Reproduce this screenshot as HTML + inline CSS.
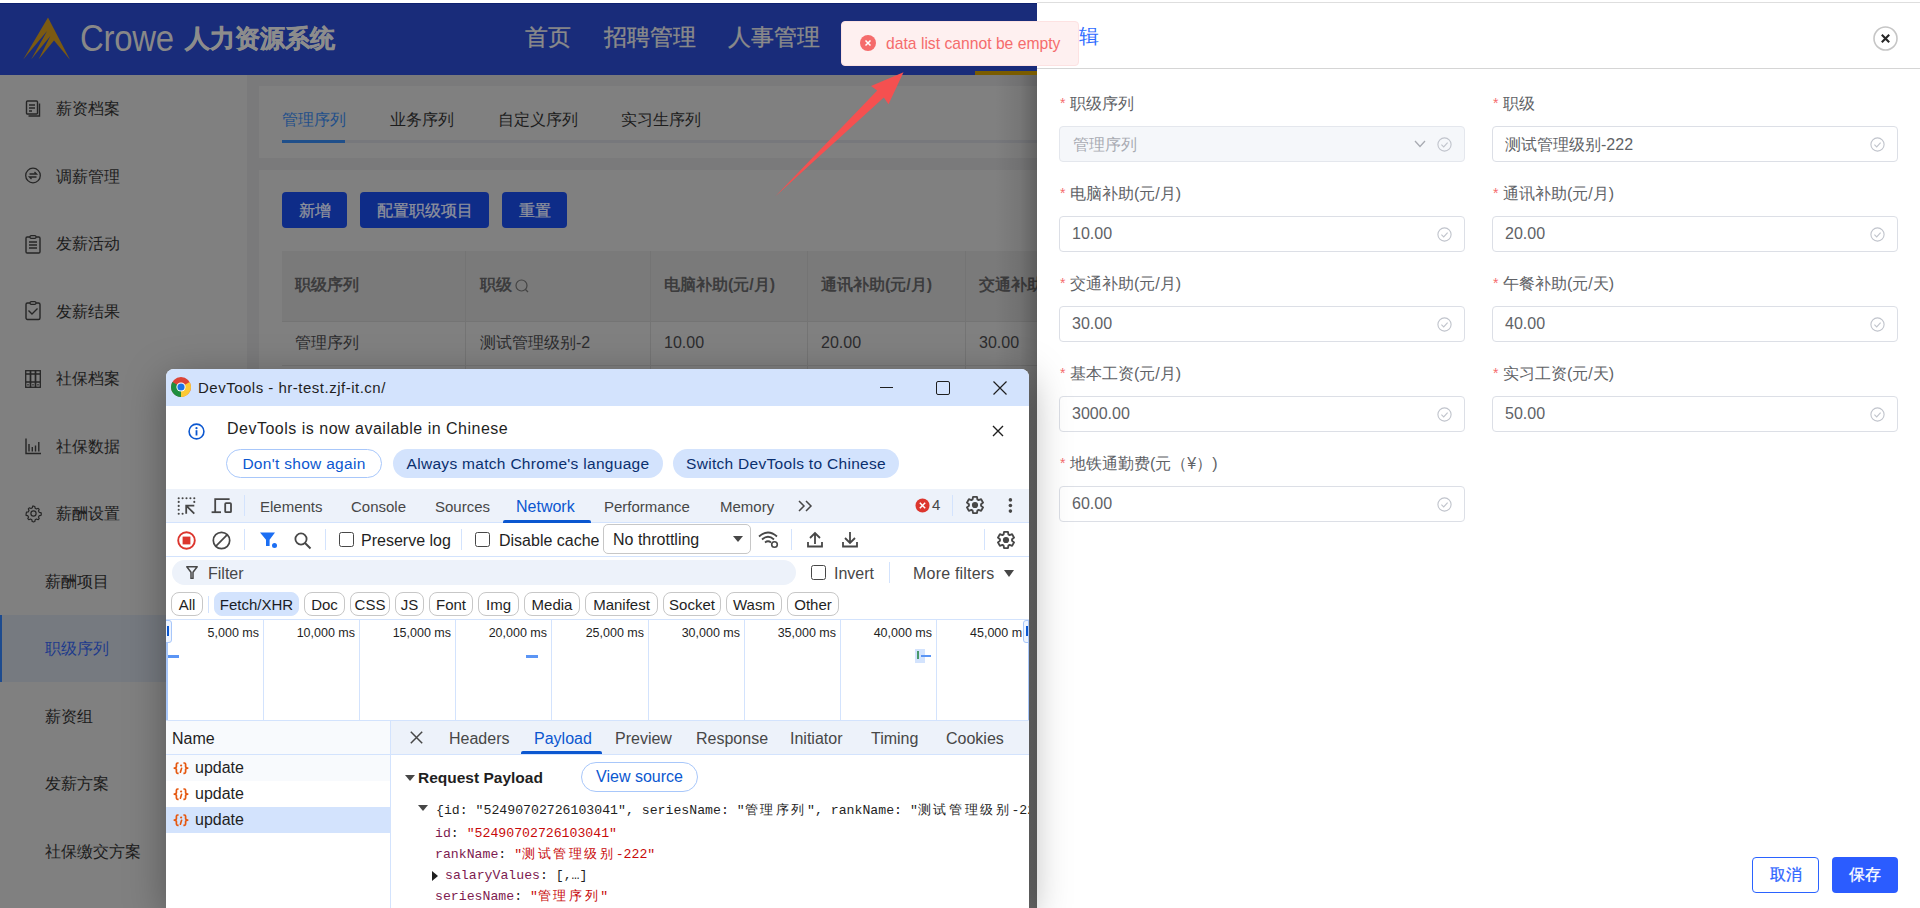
<!DOCTYPE html>
<html><head><meta charset="utf-8">
<style>
*{box-sizing:border-box;margin:0;padding:0}
html,body{width:1920px;height:908px;overflow:hidden;background:#fff;font-family:"Liberation Sans",sans-serif;position:relative}
.a{position:absolute}
.t{position:absolute;white-space:nowrap;line-height:1}
/* app */
#hdr{left:0;top:3px;width:1040px;height:72px;background:#192c7a;border-top:1px solid #0e216f}
#side{left:0;top:75px;width:247px;height:833px;background:#808080}
#main{left:247px;top:75px;width:800px;height:833px;background:#7a7a7b}
.card{background:#808080}
.sb{font-size:16px;color:#1c1c1c}
.sbi{position:absolute;left:25px;width:16px;height:17px}
.btn{position:absolute;top:192px;height:36px;background:#0e2c88;border-radius:4px;color:#8e919c;-webkit-text-stroke:0.3px #8e919c;font-size:16px;text-align:center;line-height:37px}
.th{font-size:16px;font-weight:700;color:#3c3c3d}
.td{font-size:16px;color:#2c2c2e}
</style></head><body>

<!-- ============ APP HEADER ============ -->
<div id="hdr" class="a"></div>
<svg class="a" style="left:0;top:0" width="80" height="70" viewBox="0 0 80 70"><path d="M48 17.6 L70 59.8 L54 40.5 L38.5 59.5 L50.4 36.1 L31.1 59.5 L47.1 31 L23.2 59.5 Z" fill="#7b5a12"/></svg>
<div class="t" style="left:80px;top:20px;font-size:37px;color:#888;letter-spacing:-0.3px;transform:scaleX(0.89);transform-origin:0 0">Crowe</div>
<div class="t" style="left:185px;top:26px;font-size:25px;font-weight:700;color:#8c8c8c;-webkit-text-stroke:0.5px #8c8c8c">人力资源系统</div>
<div class="t" style="left:525px;top:26px;font-size:23px;color:#8a8a8a;-webkit-text-stroke:0.35px #8a8a8a">首页</div>
<div class="t" style="left:604px;top:26px;font-size:23px;color:#8a8a8a;-webkit-text-stroke:0.35px #8a8a8a">招聘管理</div>
<div class="t" style="left:728px;top:26px;font-size:23px;color:#8a8a8a;-webkit-text-stroke:0.35px #8a8a8a">人事管理</div>
<div class="a" style="left:975px;top:71px;width:70px;height:4px;background:#7a5c00"></div>

<!-- ============ SIDEBAR ============ -->
<div id="side" class="a"></div>
<div class="a" style="left:0;top:615px;width:247px;height:67px;background:#767a80"></div>
<div class="a" style="left:0;top:615px;width:2px;height:67px;background:#1d4b8f"></div>

<svg class="a" style="left:25px;top:100px" width="17" height="18" viewBox="0 0 17 18"><rect x="1.5" y="1" width="11" height="13" rx="1" fill="none" stroke="#262626" stroke-width="1.4"/><path d="M14.5 3.5 V16 H3.5" fill="none" stroke="#262626" stroke-width="1.4"/><path d="M4 5H10M4 8H10M4 11H7" stroke="#262626" stroke-width="1.3"/></svg>
<div class="t sb" style="left:56px;top:101px">薪资档案</div>
<svg class="a" style="left:25px;top:167px" width="17" height="18" viewBox="0 0 17 18"><circle cx="8" cy="8.5" r="7.3" fill="none" stroke="#262626" stroke-width="1.3"/><path d="M4.5 7H11.5L9.5 5M11.5 10H4.5L6.5 12" fill="none" stroke="#262626" stroke-width="1.3"/></svg>
<div class="t sb" style="left:56px;top:169px">调薪管理</div>
<svg class="a" style="left:25px;top:235px" width="17" height="20" viewBox="0 0 17 20"><rect x="1" y="2" width="14" height="16" rx="1.2" fill="none" stroke="#262626" stroke-width="1.4"/><rect x="5" y="0.7" width="6" height="2.6" rx="1" fill="#808080" stroke="#262626" stroke-width="1.2"/><path d="M4 7H12M4 10H12M4 13H12" stroke="#262626" stroke-width="1.3"/></svg>
<div class="t sb" style="left:56px;top:236px">发薪活动</div>
<svg class="a" style="left:25px;top:301px" width="17" height="20" viewBox="0 0 17 20"><rect x="1" y="2" width="14" height="16.5" rx="1.5" fill="none" stroke="#262626" stroke-width="1.4"/><rect x="5" y="0.7" width="6" height="2.6" rx="1.3" fill="#808080" stroke="#262626" stroke-width="1.2"/><path d="M3.5 9.5L7 13L12.5 7.5" fill="none" stroke="#262626" stroke-width="1.4"/></svg>
<div class="t sb" style="left:56px;top:304px">发薪结果</div>
<svg class="a" style="left:25px;top:370px" width="17" height="18" viewBox="0 0 17 18"><rect x="0.7" y="0.7" width="4.6" height="16.6" fill="none" stroke="#262626" stroke-width="1.3"/><rect x="5.7" y="0.7" width="4.6" height="16.6" fill="none" stroke="#262626" stroke-width="1.3"/><rect x="10.7" y="0.7" width="4.6" height="16.6" fill="none" stroke="#262626" stroke-width="1.3"/><path d="M1 4H15M1 12H15" stroke="#262626" stroke-width="1.3"/><path d="M3 14V15.5M8 14V15.5M13 14V15.5" stroke="#262626" stroke-width="1.2"/></svg>
<div class="t sb" style="left:56px;top:371px">社保档案</div>
<svg class="a" style="left:25px;top:438px" width="17" height="18" viewBox="0 0 17 18"><path d="M1 0.5V15.5H16" fill="none" stroke="#262626" stroke-width="1.4"/><path d="M4 13.5V6M7.3 13.5V9M10.5 13.5V7.5M13.8 13.5V4" stroke="#262626" stroke-width="1.4"/></svg>
<div class="t sb" style="left:56px;top:439px">社保数据</div>
<svg class="a" style="left:25px;top:505px" width="17" height="18" viewBox="0 0 17 18"><path d="M8.5 1.2l1.3.3.4 1.8 1.3.7 1.7-.7 1 1 -.7 1.7.7 1.3 1.8.4.3 1.3-.3 1.3-1.8.4-.7 1.3.7 1.7-1 1-1.7-.7-1.3.7-.4 1.8-1.3.3-1.3-.3-.4-1.8-1.3-.7-1.7.7-1-1 .7-1.7-.7-1.3-1.8-.4L1.2 8.5l.3-1.3 1.8-.4.7-1.3-.7-1.7 1-1 1.7.7 1.3-.7.4-1.8z" fill="none" stroke="#262626" stroke-width="1.2" stroke-linejoin="round"/><circle cx="8.5" cy="8.5" r="2.6" fill="none" stroke="#262626" stroke-width="1.2"/></svg>
<div class="t sb" style="left:56px;top:506px">薪酬设置</div>
<div class="t sb" style="left:45px;top:574px;color:#1c1c1c">薪酬项目</div>
<div class="t sb" style="left:45px;top:641px;color:#1e3b8c">职级序列</div>
<div class="t sb" style="left:45px;top:709px;color:#1c1c1c">薪资组</div>
<div class="t sb" style="left:45px;top:776px;color:#1c1c1c">发薪方案</div>
<div class="t sb" style="left:45px;top:844px;color:#1c1c1c">社保缴交方案</div>

<!-- ============ MAIN CONTENT ============ -->
<div id="main" class="a"></div>
<div class="a card" style="left:259px;top:86px;width:800px;height:72px"></div>
<div class="a card" style="left:259px;top:170px;width:800px;height:740px"></div>
<div class="t" style="left:282px;top:112px;font-size:16px;color:#1f4f8a">管理序列</div>
<div class="t" style="left:390px;top:112px;font-size:16px;color:#1c1c1c">业务序列</div>
<div class="t" style="left:498px;top:112px;font-size:16px;color:#1c1c1c">自定义序列</div>
<div class="t" style="left:621px;top:112px;font-size:16px;color:#1c1c1c">实习生序列</div>
<div class="a" style="left:282px;top:140px;width:760px;height:3px;background:#77787c"></div>
<div class="a" style="left:282px;top:140px;width:63px;height:3px;background:#1f4f8a"></div>

<div class="btn" style="left:282px;width:65px">新增</div>
<div class="btn" style="left:360px;width:129px">配置职级项目</div>
<div class="btn" style="left:502px;width:65px">重置</div>

<!-- table -->
<div class="a" style="left:282px;top:251px;width:760px;height:70px;background:#7a7a7a"></div>
<div class="a" style="left:282px;top:321px;width:760px;height:1px;background:#747474"></div>
<div class="a" style="left:282px;top:365px;width:760px;height:1px;background:#747474"></div>
<div class="a" style="left:465px;top:251px;width:1px;height:120px;background:#747474"></div>
<div class="a" style="left:650px;top:251px;width:1px;height:120px;background:#747474"></div>
<div class="a" style="left:807px;top:251px;width:1px;height:120px;background:#747474"></div>
<div class="a" style="left:965px;top:251px;width:1px;height:120px;background:#747474"></div>
<div class="t th" style="left:295px;top:277px">职级序列</div>
<div class="t th" style="left:480px;top:277px">职级</div>
<svg class="a" style="left:514px;top:278px" width="16" height="16" viewBox="0 0 16 16"><circle cx="7.5" cy="7.5" r="5.5" fill="none" stroke="#444" stroke-width="1.2"/><path d="M11.5 11.5 L14 14" stroke="#444" stroke-width="1.2"/></svg>
<div class="t th" style="left:664px;top:277px">电脑补助(元/月)</div>
<div class="t th" style="left:821px;top:277px">通讯补助(元/月)</div>
<div class="t th" style="left:979px;top:277px">交通补助(元/月)</div>
<div class="t td" style="left:295px;top:335px">管理序列</div>
<div class="t td" style="left:480px;top:335px">测试管理级别-2</div>
<div class="t td" style="left:664px;top:335px">10.00</div>
<div class="t td" style="left:821px;top:335px">20.00</div>
<div class="t td" style="left:979px;top:335px">30.00</div>

<!-- shadow of drawer onto overlay -->
<div class="a" style="left:995px;top:75px;width:42px;height:833px;background:linear-gradient(90deg,rgba(0,0,0,0),rgba(0,0,0,0.08) 60%,rgba(0,0,0,0.24))"></div>

<!-- ============ DEVTOOLS WINDOW ============ -->
<div id="dt" class="a" style="z-index:5;left:166px;top:369px;width:863px;height:539px;background:#fff;border-radius:8px 8px 0 0;overflow:hidden;box-shadow:0 10px 40px rgba(0,0,0,0.34);font-family:'Liberation Sans',sans-serif;color:#1f1f1f">
 <style>
  #dt .t{font-size:15px}
  #dt .ln{position:absolute;background:#d3e3fd}
  #dt .chip{position:absolute;top:223px;height:24px;border:1px solid #c7c7c7;border-radius:8px;font-size:15px;line-height:23px;text-align:center;color:#1f1f1f}
  #dt .gl{position:absolute;top:251px;width:1px;height:100px;background:#d3e3fd}
  #dt .tl{position:absolute;top:258px;font-size:12.5px;line-height:1;white-space:nowrap;color:#1f1f1f;text-align:right}
  #dt .mono{font-family:'Liberation Mono',monospace;font-size:13.2px;line-height:1;white-space:nowrap;position:absolute}
  #dt .cj{letter-spacing:2.6px}
  #dt .k{color:#7d1b50}
  #dt .s{color:#c80a0a}
 </style>
 <!-- title bar -->
 <div class="a" style="left:0;top:0;width:863px;height:37px;background:#d3e3fd"></div>
 <svg class="a" style="left:5px;top:8px" width="20" height="20" viewBox="0 0 20 20">
  <circle cx="10" cy="10" r="10" fill="#db4437"/>
  <path d="M10 10 L18.66 5 A10 10 0 0 1 10 20 Z" fill="#fcc934"/>
  <path d="M10 10 L10 20 A10 10 0 0 1 1.34 5 Z" fill="#1e8e3e"/>
  <circle cx="10" cy="10" r="4.6" fill="#fff"/>
  <circle cx="10" cy="10" r="3.6" fill="#1a73e8"/>
 </svg>
 <div class="t" style="left:32px;top:11px;font-size:15px;letter-spacing:0.5px;color:#1f1f1f">DevTools - hr-test.zjf-it.cn/</div>
 <div class="a" style="left:714px;top:18px;width:13px;height:1px;background:#1f1f1f"></div>
 <div class="a" style="left:770px;top:12px;width:14px;height:14px;border:1.2px solid #1f1f1f;border-radius:2px"></div>
 <svg class="a" style="left:826px;top:11px" width="16" height="16" viewBox="0 0 16 16"><path d="M1.5 1.5L14.5 14.5M14.5 1.5L1.5 14.5" stroke="#1f1f1f" stroke-width="1.2"/></svg>

 <!-- info bar -->
 <svg class="a" style="left:22px;top:54px" width="17" height="17" viewBox="0 0 17 17"><circle cx="8.5" cy="8.5" r="7.4" fill="none" stroke="#0b57d0" stroke-width="1.6"/><circle cx="8.5" cy="5.2" r="1.1" fill="#0b57d0"/><rect x="7.6" y="7.2" width="1.8" height="5.3" fill="#0b57d0"/></svg>
 <div class="t" style="left:61px;top:52px;font-size:16px;letter-spacing:0.5px;color:#1f1f1f">DevTools is now available in Chinese</div>
 <svg class="a" style="left:826px;top:56px" width="12" height="12" viewBox="0 0 12 12"><path d="M1 1L11 11M11 1L1 11" stroke="#1f1f1f" stroke-width="1.4"/></svg>
 <div class="a" style="left:60px;top:80px;width:156px;height:29px;border:1px solid #a8c7fa;border-radius:15px;color:#0b57d0;font-size:15.5px;line-height:27px;text-align:center;letter-spacing:0.3px">Don't show again</div>
 <div class="a" style="left:227px;top:80px;width:270px;height:29px;background:#d3e3fd;border-radius:15px;color:#0a2f6e;font-size:15.5px;line-height:29px;text-align:center;letter-spacing:0.3px">Always match Chrome's language</div>
 <div class="a" style="left:507px;top:80px;width:226px;height:29px;background:#d3e3fd;border-radius:15px;color:#0a2f6e;font-size:15.5px;line-height:29px;text-align:center;letter-spacing:0.3px">Switch DevTools to Chinese</div>

 <!-- tab bar -->
 <div class="a" style="left:0;top:120px;width:863px;height:34px;background:#edf2fa;border-bottom:1px solid #d3e3fd"></div>
 <svg class="a" style="left:11px;top:128px" width="20" height="19" viewBox="0 0 20 19"><circle cx="1.7" cy="1.3" r="1.05" fill="#474747"/><circle cx="5.6" cy="1.3" r="1.05" fill="#474747"/><circle cx="9.5" cy="1.3" r="1.05" fill="#474747"/><circle cx="13.4" cy="1.3" r="1.05" fill="#474747"/><circle cx="17.3" cy="1.3" r="1.05" fill="#474747"/><circle cx="1.7" cy="4.9" r="1.05" fill="#474747"/><circle cx="1.7" cy="8.9" r="1.05" fill="#474747"/><circle cx="1.7" cy="12.8" r="1.05" fill="#474747"/><circle cx="1.7" cy="16.7" r="1.05" fill="#474747"/><circle cx="5.6" cy="16.7" r="1.05" fill="#474747"/><circle cx="17.3" cy="4.9" r="1.05" fill="#474747"/><path d="M17.3 8.6H9.2V16.7M9.2 8.6L17.3 16.7" fill="none" stroke="#474747" stroke-width="1.8"/></svg>
 <svg class="a" style="left:45px;top:129px" width="22" height="17" viewBox="0 0 22 17"><path d="M18.6 1.2H4.2V14.2" fill="none" stroke="#474747" stroke-width="1.8"/><path d="M0.6 14.2H10" stroke="#474747" stroke-width="1.8"/><rect x="14.2" y="5.1" width="5.8" height="9.1" rx="0.8" fill="none" stroke="#474747" stroke-width="1.8"/></svg>
 <div class="ln" style="left:78px;top:126px;width:1px;height:21px"></div>
 <div class="t" style="left:94px;top:130px;color:#474747">Elements</div>
 <div class="t" style="left:185px;top:130px;color:#474747">Console</div>
 <div class="t" style="left:269px;top:130px;color:#474747">Sources</div>
 <div class="t" style="left:350px;top:130px;color:#0b57d0;font-size:16px">Network</div>
 <div class="a" style="left:337px;top:151px;width:88px;height:3px;background:#0b57d0;border-radius:2px 2px 0 0"></div>
 <div class="t" style="left:438px;top:130px;color:#474747">Performance</div>
 <div class="t" style="left:554px;top:130px;color:#474747">Memory</div>
 <svg class="a" style="left:632px;top:131px" width="16" height="12" viewBox="0 0 16 12"><path d="M1 1L6 6L1 11M8 1L13 6L8 11" fill="none" stroke="#474747" stroke-width="1.5"/></svg>
 <svg class="a" style="left:749px;top:129px" width="15" height="15" viewBox="0 0 15 15"><circle cx="7.5" cy="7.5" r="7" fill="#dc362e"/><path d="M4.8 4.8L10.2 10.2M10.2 4.8L4.8 10.2" stroke="#fff" stroke-width="1.5"/></svg>
 <div class="t" style="left:766px;top:128px;color:#474747">4</div>
 <div class="ln" style="left:786px;top:126px;width:1px;height:21px"></div>
 <svg class="a" style="left:799px;top:126px" width="20" height="20" viewBox="0 0 20 20"><path d="M7.58 4.40 L8.04 1.83 L11.96 1.83 L12.42 4.40 L13.64 5.10 L16.09 4.22 L18.05 7.61 L16.06 9.30 L16.06 10.70 L18.05 12.39 L16.09 15.78 L13.64 14.90 L12.42 15.60 L11.96 18.17 L8.04 18.17 L7.58 15.60 L6.36 14.90 L3.91 15.78 L1.95 12.39 L3.94 10.70 L3.94 9.30 L1.95 7.61 L3.91 4.22 L6.36 5.10Z" fill="none" stroke="#474747" stroke-width="1.9" stroke-linejoin="round"/><circle cx="10" cy="10" r="3.1" fill="#474747"/></svg>
 <svg class="a" style="left:842px;top:128px" width="5" height="16" viewBox="0 0 5 16"><circle cx="2.4" cy="2.9" r="1.8" fill="#474747"/><circle cx="2.4" cy="8.5" r="1.8" fill="#474747"/><circle cx="2.4" cy="14.1" r="1.8" fill="#474747"/></svg>

 <!-- toolbar -->
 <div class="a" style="left:0;top:187px;width:863px;height:1px;background:#d3e3fd"></div>
 <svg class="a" style="left:11px;top:162px" width="19" height="19" viewBox="0 0 19 19"><circle cx="9.5" cy="9.5" r="8.3" fill="none" stroke="#dc362e" stroke-width="1.9"/><rect x="5.6" y="5.6" width="7.8" height="7.8" fill="#dc362e"/></svg>
 <svg class="a" style="left:46px;top:162px" width="19" height="19" viewBox="0 0 19 19"><circle cx="9.5" cy="9.5" r="8.2" fill="none" stroke="#474747" stroke-width="1.7"/><path d="M15.3 3.7L3.7 15.3" stroke="#474747" stroke-width="1.7"/></svg>
 <div class="ln" style="left:78px;top:160px;width:1px;height:21px"></div>
 <svg class="a" style="left:94px;top:163px" width="18" height="17" viewBox="0 0 18 17"><path d="M0 0.5H15L9.6 7.8V14H6V7.8Z" fill="#1b6ef3"/><circle cx="14.5" cy="13.5" r="2.5" fill="#1b6ef3"/></svg>
 <svg class="a" style="left:128px;top:163px" width="18" height="18" viewBox="0 0 18 18"><circle cx="7" cy="7" r="5.6" fill="none" stroke="#474747" stroke-width="1.8"/><path d="M11 11L16.5 16.5" stroke="#474747" stroke-width="1.9"/></svg>
 <div class="ln" style="left:159px;top:160px;width:1px;height:21px"></div>
 <div class="a" style="left:173px;top:163px;width:15px;height:15px;border:1.5px solid #474747;border-radius:2.5px"></div>
 <div class="t" style="left:195px;top:164px;font-size:16px;color:#1f1f1f">Preserve log</div>
 <div class="ln" style="left:295px;top:160px;width:1px;height:21px"></div>
 <div class="a" style="left:309px;top:163px;width:15px;height:15px;border:1.5px solid #474747;border-radius:2.5px"></div>
 <div class="t" style="left:333px;top:164px;font-size:16px;color:#1f1f1f">Disable cache</div>
 <div class="a" style="left:437px;top:155px;width:148px;height:30px;border:1px solid #c7c7c7;border-radius:5px"></div>
 <div class="t" style="left:447px;top:163px;font-size:16px;color:#1f1f1f">No throttling</div>
 <svg class="a" style="left:567px;top:167px" width="10" height="6" viewBox="0 0 10 6"><path d="M0 0H10L5 6Z" fill="#474747"/></svg>
 <svg class="a" style="left:592px;top:161px" width="22" height="19" viewBox="0 0 22 19"><path d="M1 6.5Q10 -1.5 19 6.5M4 9.5Q10 4 16 9.5M7 12.5Q10 10 13 12.5" fill="none" stroke="#474747" stroke-width="1.7"/><circle cx="16.5" cy="14.5" r="2.8" fill="none" stroke="#474747" stroke-width="1.6"/></svg>
 <div class="ln" style="left:625px;top:160px;width:1px;height:21px"></div>
 <svg class="a" style="left:641px;top:162px" width="16" height="17" viewBox="0 0 16 17"><path d="M8 13V2M3 7L8 2L13 7" fill="none" stroke="#474747" stroke-width="1.8"/><path d="M1 11V15.5H15V11" fill="none" stroke="#474747" stroke-width="1.8"/></svg>
 <svg class="a" style="left:676px;top:162px" width="16" height="17" viewBox="0 0 16 17"><path d="M8 1V12M3 7L8 12L13 7" fill="none" stroke="#474747" stroke-width="1.8"/><path d="M1 11V15.5H15V11" fill="none" stroke="#474747" stroke-width="1.8"/></svg>
 <div class="ln" style="left:818px;top:160px;width:1px;height:21px"></div>
 <svg class="a" style="left:830px;top:161px" width="20" height="20" viewBox="0 0 20 20"><path d="M7.58 4.40 L8.04 1.83 L11.96 1.83 L12.42 4.40 L13.64 5.10 L16.09 4.22 L18.05 7.61 L16.06 9.30 L16.06 10.70 L18.05 12.39 L16.09 15.78 L13.64 14.90 L12.42 15.60 L11.96 18.17 L8.04 18.17 L7.58 15.60 L6.36 14.90 L3.91 15.78 L1.95 12.39 L3.94 10.70 L3.94 9.30 L1.95 7.61 L3.91 4.22 L6.36 5.10Z" fill="none" stroke="#474747" stroke-width="1.9" stroke-linejoin="round"/><circle cx="10" cy="10" r="3.1" fill="#474747"/></svg>

 <!-- filter row -->
 <div class="a" style="left:0;top:220px;width:863px;height:0"></div>
 <div class="a" style="left:6px;top:191px;width:624px;height:25px;background:#edf2fa;border-radius:13px"></div>
 <svg class="a" style="left:20px;top:197px" width="12" height="13" viewBox="0 0 12 13"><path d="M0.8 0.8H11.2L7 6.3V12.5H5V6.3Z" fill="none" stroke="#474747" stroke-width="1.5" stroke-linejoin="round"/></svg>
 <div class="t" style="left:42px;top:197px;font-size:16px;color:#474747">Filter</div>
 <div class="a" style="left:645px;top:196px;width:15px;height:15px;border:1.5px solid #474747;border-radius:2.5px"></div>
 <div class="t" style="left:668px;top:197px;font-size:16px;color:#474747">Invert</div>
 <div class="ln" style="left:723px;top:193px;width:1px;height:21px"></div>
 <div class="t" style="left:747px;top:197px;font-size:16px;letter-spacing:0.2px;color:#474747">More filters</div>
 <svg class="a" style="left:838px;top:201px" width="10" height="7" viewBox="0 0 10 7"><path d="M0 0H10L5 7Z" fill="#474747"/></svg>

 <!-- chips -->
 <div class="chip" style="left:5px;width:32px">All</div>
 <div class="ln" style="left:42px;top:227px;width:1px;height:17px"></div>
 <div class="chip" style="left:48px;width:85px;background:#d3e3fd;border-color:#d3e3fd;color:#1a1d26">Fetch/XHR</div>
 <div class="chip" style="left:138px;width:41px">Doc</div>
 <div class="chip" style="left:184px;width:40px">CSS</div>
 <div class="chip" style="left:229px;width:29px">JS</div>
 <div class="chip" style="left:263px;width:44px">Font</div>
 <div class="chip" style="left:312px;width:41px">Img</div>
 <div class="chip" style="left:358px;width:56px">Media</div>
 <div class="chip" style="left:419px;width:73px">Manifest</div>
 <div class="chip" style="left:497px;width:58px">Socket</div>
 <div class="chip" style="left:560px;width:56px">Wasm</div>
 <div class="chip" style="left:621px;width:52px">Other</div>

 <!-- overview -->
 <div class="a" style="left:0;top:250px;width:863px;height:1px;background:#d3e3fd"></div>
 <div class="a" style="left:0;top:351px;width:863px;height:1px;background:#d3e3fd"></div>
 <div class="gl" style="left:97px"></div><div class="gl" style="left:193px"></div><div class="gl" style="left:289px"></div><div class="gl" style="left:385px"></div>
 <div class="gl" style="left:482px"></div><div class="gl" style="left:578px"></div><div class="gl" style="left:674px"></div><div class="gl" style="left:770px"></div>
 <div class="tl" style="left:33px;width:60px">5,000 ms</div>
 <div class="tl" style="left:119px;width:70px">10,000 ms</div>
 <div class="tl" style="left:215px;width:70px">15,000 ms</div>
 <div class="tl" style="left:311px;width:70px">20,000 ms</div>
 <div class="tl" style="left:408px;width:70px">25,000 ms</div>
 <div class="tl" style="left:504px;width:70px">30,000 ms</div>
 <div class="tl" style="left:600px;width:70px">35,000 ms</div>
 <div class="tl" style="left:696px;width:70px">40,000 ms</div>
 <div class="tl" style="left:792px;width:70px;text-align:left;left:804px">45,000 m</div>
 <div class="a" style="left:0;top:251px;width:2px;height:100px;background:#a8c7fa"></div>
 <div class="a" style="left:-4px;top:251px;width:10px;height:23px;border:1px solid #a8c7fa;border-radius:3px;background:#eef4fe"></div>
 <div class="a" style="left:1px;top:257px;width:1.5px;height:10px;background:#0b57d0"></div>
 <div class="a" style="left:2px;top:286px;width:11px;height:3px;background:#5b95f5"></div>
 <div class="a" style="left:360px;top:286px;width:12px;height:3px;background:#5b95f5"></div>
 <div class="a" style="left:749px;top:280px;width:10px;height:14px;background:#d3e3fd"></div>
 <div class="a" style="left:751px;top:282px;width:2px;height:8px;background:#4a9a6a"></div>
 <div class="a" style="left:755px;top:286px;width:10px;height:2px;background:#5b95f5"></div>
 <div class="a" style="left:857px;top:251px;width:10px;height:23px;border:1px solid #a8c7fa;border-radius:3px;background:#eef4fe"></div>
 <div class="a" style="left:860px;top:257px;width:3px;height:10px;background:#0b57d0"></div>
 <div class="a" style="left:862px;top:251px;width:1px;height:100px;background:#a8c7fa"></div>

 <!-- split -->
 <div class="a" style="left:0;top:352px;width:224px;height:33px;background:#f8fafd"></div>
 <div class="a" style="left:0;top:385px;width:224px;height:1px;background:#d3e3fd"></div>
 <div class="a" style="left:224px;top:352px;width:1px;height:187px;background:#d3e3fd"></div>
 <div class="t" style="left:6px;top:362px;font-size:16px;color:#1f1f1f">Name</div>
 <div class="a" style="left:0;top:386px;width:224px;height:26px;background:#f8fafd"></div>
 <div class="a" style="left:0;top:438px;width:224px;height:26px;background:#d3e3fd"></div>
 <!-- rows -->
 <svg class="a" style="left:7px;top:393px" width="17" height="13" viewBox="0 0 17 13"><path d="M5.6 1H4.6Q3.4 1 3.4 2.2V4.6Q3.4 5.9 1.3 6.1Q3.4 6.3 3.4 7.6V10Q3.4 11.3 4.6 11.3H5.6M10.4 1H11.4Q12.6 1 12.6 2.2V4.6Q12.6 5.9 14.7 6.1Q12.6 6.3 12.6 7.6V10Q12.6 11.3 11.4 11.3H10.4" fill="none" stroke="#e5570f" stroke-width="1.7" stroke-linejoin="round"/><circle cx="8.1" cy="3.5" r="1.1" fill="#e5570f"/><path d="M8.6 6.3L7.4 10.3" stroke="#e5570f" stroke-width="1.6" stroke-linecap="round"/></svg>
 <div class="t" style="left:29px;top:391px;font-size:16px;color:#1f1f1f">update</div>
 <svg class="a" style="left:7px;top:419px" width="17" height="13" viewBox="0 0 17 13"><path d="M5.6 1H4.6Q3.4 1 3.4 2.2V4.6Q3.4 5.9 1.3 6.1Q3.4 6.3 3.4 7.6V10Q3.4 11.3 4.6 11.3H5.6M10.4 1H11.4Q12.6 1 12.6 2.2V4.6Q12.6 5.9 14.7 6.1Q12.6 6.3 12.6 7.6V10Q12.6 11.3 11.4 11.3H10.4" fill="none" stroke="#e5570f" stroke-width="1.7" stroke-linejoin="round"/><circle cx="8.1" cy="3.5" r="1.1" fill="#e5570f"/><path d="M8.6 6.3L7.4 10.3" stroke="#e5570f" stroke-width="1.6" stroke-linecap="round"/></svg>
 <div class="t" style="left:29px;top:417px;font-size:16px;color:#1f1f1f">update</div>
 <svg class="a" style="left:7px;top:445px" width="17" height="13" viewBox="0 0 17 13"><path d="M5.6 1H4.6Q3.4 1 3.4 2.2V4.6Q3.4 5.9 1.3 6.1Q3.4 6.3 3.4 7.6V10Q3.4 11.3 4.6 11.3H5.6M10.4 1H11.4Q12.6 1 12.6 2.2V4.6Q12.6 5.9 14.7 6.1Q12.6 6.3 12.6 7.6V10Q12.6 11.3 11.4 11.3H10.4" fill="none" stroke="#e5570f" stroke-width="1.7" stroke-linejoin="round"/><circle cx="8.1" cy="3.5" r="1.1" fill="#e5570f"/><path d="M8.6 6.3L7.4 10.3" stroke="#e5570f" stroke-width="1.6" stroke-linecap="round"/></svg>
 <div class="t" style="left:29px;top:443px;font-size:16px;color:#1f1f1f">update</div>

 <!-- details -->
 <div class="a" style="left:225px;top:352px;width:638px;height:33px;background:#edf2fa"></div>
 <div class="a" style="left:225px;top:385px;width:638px;height:1px;background:#d3e3fd"></div>
 <svg class="a" style="left:244px;top:362px" width="13" height="13" viewBox="0 0 13 13"><path d="M0.8 0.8L12.2 12.2M12.2 0.8L0.8 12.2" stroke="#474747" stroke-width="1.5"/></svg>
 <div class="t" style="left:283px;top:362px;font-size:16px;color:#474747">Headers</div>
 <div class="t" style="left:368px;top:362px;font-size:16px;color:#0b57d0">Payload</div>
 <div class="a" style="left:355px;top:382px;width:81px;height:3px;background:#0b57d0;border-radius:2px 2px 0 0"></div>
 <div class="t" style="left:449px;top:362px;font-size:16px;color:#474747">Preview</div>
 <div class="t" style="left:530px;top:362px;font-size:16px;color:#474747">Response</div>
 <div class="t" style="left:624px;top:362px;font-size:16px;color:#474747">Initiator</div>
 <div class="t" style="left:705px;top:362px;font-size:16px;color:#474747">Timing</div>
 <div class="t" style="left:780px;top:362px;font-size:16px;color:#474747">Cookies</div>

 <svg class="a" style="left:239px;top:406px" width="10" height="6" viewBox="0 0 10 6"><path d="M0 0H10L5 6Z" fill="#474747"/></svg>
 <div class="t" style="left:252px;top:401px;font-size:15.5px;font-weight:700;color:#1f1f1f">Request Payload</div>
 <div class="a" style="left:415px;top:393px;width:117px;height:30px;border:1px solid #a8c7fa;border-radius:15px;color:#0b57d0;font-size:16px;line-height:28px;text-align:center">View source</div>

 <svg class="a" style="left:252px;top:436px" width="10" height="6" viewBox="0 0 10 6"><path d="M0 0H10L5 6Z" fill="#474747"/></svg>
 <div class="mono" style="left:270px;top:435px;color:#1f1f1f">{id: "52490702726103041", seriesName: "<span class="cj">管理序列</span>", rankName: "<span class="cj">测试管理级别</span>-222", salaryValues: [,…]}</div>
 <div class="mono" style="left:269px;top:458px"><span class="k">id</span>: <span class="s">"52490702726103041"</span></div>
 <div class="mono" style="left:269px;top:479px"><span class="k">rankName</span>: <span class="s">"<span class="cj">测试管理级别</span>-222"</span></div>
 <svg class="a" style="left:266px;top:502px" width="6" height="10" viewBox="0 0 6 10"><path d="M0 0V10L6 5Z" fill="#1f1f1f"/></svg>
 <div class="mono" style="left:279px;top:500px"><span class="k">salaryValues</span>: [,…]</div>
 <div class="mono" style="left:269px;top:521px"><span class="k">seriesName</span>: <span class="s">"<span class="cj">管理序列</span>"</span></div>
</div>


<!-- ============ DRAWER ============ -->
<div class="a" style="left:1037px;top:3px;width:883px;height:905px;background:#fff"></div>
<div class="a" style="left:1037px;top:2px;width:883px;height:1px;background:#dedede"></div>
<div class="a" style="left:1037px;top:68px;width:883px;height:1px;background:#d5d5d5"></div>
<div class="t" style="left:1059px;top:26px;font-size:20px;color:#2f6bff">编辑</div>
<svg class="a" style="left:1873px;top:26px" width="25" height="25" viewBox="0 0 25 25"><circle cx="12.5" cy="12.5" r="11.5" fill="none" stroke="#c6c6c6" stroke-width="1.6"/><path d="M8.8 8.8L16.2 16.2M16.2 8.8L8.8 16.2" stroke="#262626" stroke-width="2.1"/></svg>
<div class="t" style="left:1060px;top:96px;font-size:14px;color:#f56c6c">*</div>
<div class="t" style="left:1070px;top:96px;font-size:16px;color:#606266">职级序列</div>
<div class="a" style="left:1059px;top:126px;width:406px;height:36px;background:#f5f7fa;border:1px solid #e4e7ed;border-radius:4px"></div>
<div class="t" style="left:1073px;top:137px;font-size:16px;color:#a8abb2">管理序列</div>
<svg class="a" style="left:1437px;top:137px" width="15" height="15" viewBox="0 0 15 15"><circle cx="7.5" cy="7.5" r="6.6" fill="none" stroke="#c0c4cc" stroke-width="1.1"/><path d="M4.4 7.6L6.7 9.9L10.6 5.6" fill="none" stroke="#c0c4cc" stroke-width="1.1"/></svg>
<svg class="a" style="left:1414px;top:140px" width="12" height="8" viewBox="0 0 12 8"><path d="M1 1L6 6.5L11 1" fill="none" stroke="#a8abb2" stroke-width="1.3"/></svg>
<div class="t" style="left:1493px;top:96px;font-size:14px;color:#f56c6c">*</div>
<div class="t" style="left:1503px;top:96px;font-size:16px;color:#606266">职级</div>
<div class="a" style="left:1492px;top:126px;width:406px;height:36px;background:#fff;border:1px solid #dcdfe6;border-radius:4px"></div>
<div class="t" style="left:1505px;top:137px;font-size:16px;color:#606266">测试管理级别-222</div>
<svg class="a" style="left:1870px;top:137px" width="15" height="15" viewBox="0 0 15 15"><circle cx="7.5" cy="7.5" r="6.6" fill="none" stroke="#c0c4cc" stroke-width="1.1"/><path d="M4.4 7.6L6.7 9.9L10.6 5.6" fill="none" stroke="#c0c4cc" stroke-width="1.1"/></svg>
<div class="t" style="left:1060px;top:186px;font-size:14px;color:#f56c6c">*</div>
<div class="t" style="left:1070px;top:186px;font-size:16px;color:#606266">电脑补助(元/月)</div>
<div class="a" style="left:1059px;top:216px;width:406px;height:36px;background:#fff;border:1px solid #dcdfe6;border-radius:4px"></div>
<div class="t" style="left:1072px;top:226px;font-size:16px;color:#606266">10.00</div>
<svg class="a" style="left:1437px;top:227px" width="15" height="15" viewBox="0 0 15 15"><circle cx="7.5" cy="7.5" r="6.6" fill="none" stroke="#c0c4cc" stroke-width="1.1"/><path d="M4.4 7.6L6.7 9.9L10.6 5.6" fill="none" stroke="#c0c4cc" stroke-width="1.1"/></svg>
<div class="t" style="left:1493px;top:186px;font-size:14px;color:#f56c6c">*</div>
<div class="t" style="left:1503px;top:186px;font-size:16px;color:#606266">通讯补助(元/月)</div>
<div class="a" style="left:1492px;top:216px;width:406px;height:36px;background:#fff;border:1px solid #dcdfe6;border-radius:4px"></div>
<div class="t" style="left:1505px;top:226px;font-size:16px;color:#606266">20.00</div>
<svg class="a" style="left:1870px;top:227px" width="15" height="15" viewBox="0 0 15 15"><circle cx="7.5" cy="7.5" r="6.6" fill="none" stroke="#c0c4cc" stroke-width="1.1"/><path d="M4.4 7.6L6.7 9.9L10.6 5.6" fill="none" stroke="#c0c4cc" stroke-width="1.1"/></svg>
<div class="t" style="left:1060px;top:276px;font-size:14px;color:#f56c6c">*</div>
<div class="t" style="left:1070px;top:276px;font-size:16px;color:#606266">交通补助(元/月)</div>
<div class="a" style="left:1059px;top:306px;width:406px;height:36px;background:#fff;border:1px solid #dcdfe6;border-radius:4px"></div>
<div class="t" style="left:1072px;top:316px;font-size:16px;color:#606266">30.00</div>
<svg class="a" style="left:1437px;top:317px" width="15" height="15" viewBox="0 0 15 15"><circle cx="7.5" cy="7.5" r="6.6" fill="none" stroke="#c0c4cc" stroke-width="1.1"/><path d="M4.4 7.6L6.7 9.9L10.6 5.6" fill="none" stroke="#c0c4cc" stroke-width="1.1"/></svg>
<div class="t" style="left:1493px;top:276px;font-size:14px;color:#f56c6c">*</div>
<div class="t" style="left:1503px;top:276px;font-size:16px;color:#606266">午餐补助(元/天)</div>
<div class="a" style="left:1492px;top:306px;width:406px;height:36px;background:#fff;border:1px solid #dcdfe6;border-radius:4px"></div>
<div class="t" style="left:1505px;top:316px;font-size:16px;color:#606266">40.00</div>
<svg class="a" style="left:1870px;top:317px" width="15" height="15" viewBox="0 0 15 15"><circle cx="7.5" cy="7.5" r="6.6" fill="none" stroke="#c0c4cc" stroke-width="1.1"/><path d="M4.4 7.6L6.7 9.9L10.6 5.6" fill="none" stroke="#c0c4cc" stroke-width="1.1"/></svg>
<div class="t" style="left:1060px;top:366px;font-size:14px;color:#f56c6c">*</div>
<div class="t" style="left:1070px;top:366px;font-size:16px;color:#606266">基本工资(元/月)</div>
<div class="a" style="left:1059px;top:396px;width:406px;height:36px;background:#fff;border:1px solid #dcdfe6;border-radius:4px"></div>
<div class="t" style="left:1072px;top:406px;font-size:16px;color:#606266">3000.00</div>
<svg class="a" style="left:1437px;top:407px" width="15" height="15" viewBox="0 0 15 15"><circle cx="7.5" cy="7.5" r="6.6" fill="none" stroke="#c0c4cc" stroke-width="1.1"/><path d="M4.4 7.6L6.7 9.9L10.6 5.6" fill="none" stroke="#c0c4cc" stroke-width="1.1"/></svg>
<div class="t" style="left:1493px;top:366px;font-size:14px;color:#f56c6c">*</div>
<div class="t" style="left:1503px;top:366px;font-size:16px;color:#606266">实习工资(元/天)</div>
<div class="a" style="left:1492px;top:396px;width:406px;height:36px;background:#fff;border:1px solid #dcdfe6;border-radius:4px"></div>
<div class="t" style="left:1505px;top:406px;font-size:16px;color:#606266">50.00</div>
<svg class="a" style="left:1870px;top:407px" width="15" height="15" viewBox="0 0 15 15"><circle cx="7.5" cy="7.5" r="6.6" fill="none" stroke="#c0c4cc" stroke-width="1.1"/><path d="M4.4 7.6L6.7 9.9L10.6 5.6" fill="none" stroke="#c0c4cc" stroke-width="1.1"/></svg>
<div class="t" style="left:1060px;top:456px;font-size:14px;color:#f56c6c">*</div>
<div class="t" style="left:1070px;top:456px;font-size:16px;color:#606266">地铁通勤费(元（¥）)</div>
<div class="a" style="left:1059px;top:486px;width:406px;height:36px;background:#fff;border:1px solid #dcdfe6;border-radius:4px"></div>
<div class="t" style="left:1072px;top:496px;font-size:16px;color:#606266">60.00</div>
<svg class="a" style="left:1437px;top:497px" width="15" height="15" viewBox="0 0 15 15"><circle cx="7.5" cy="7.5" r="6.6" fill="none" stroke="#c0c4cc" stroke-width="1.1"/><path d="M4.4 7.6L6.7 9.9L10.6 5.6" fill="none" stroke="#c0c4cc" stroke-width="1.1"/></svg>
<div class="a" style="left:1752px;top:857px;width:67px;height:36px;border:1px solid #2b63ff;border-radius:4px;color:#2b63ff;-webkit-text-stroke:0.25px #2b63ff;font-size:16px;line-height:34px;text-align:center">取消</div>
<div class="a" style="left:1832px;top:857px;width:66px;height:36px;background:#2b5cff;border-radius:4px;color:#fff;-webkit-text-stroke:0.3px #fff;font-size:16px;line-height:35px;text-align:center">保存</div>
<!-- toast -->
<div class="a" style="left:841px;top:21px;width:238px;height:45px;background:#fef0f0;border:1px solid #fde2e2;border-radius:4px"></div>
<svg class="a" style="left:860px;top:35px" width="16" height="16" viewBox="0 0 16 16"><circle cx="8" cy="8" r="8" fill="#f56c6c"/><path d="M5.5 5.5L10.5 10.5M10.5 5.5L5.5 10.5" stroke="#fff" stroke-width="1.5"/></svg>
<div class="t" style="left:886px;top:36px;font-size:15.7px;color:#f56c6c">data list cannot be empty</div>
<svg class="a" style="left:0;top:0" width="1920" height="908" viewBox="0 0 1920 908"><path d="M775.2 196.6 L877.2 90.5 L871 86 L903.5 72.2 L888.5 104.3 L883.8 97.6 Z" fill="#f55050"/></svg>

</body></html>
